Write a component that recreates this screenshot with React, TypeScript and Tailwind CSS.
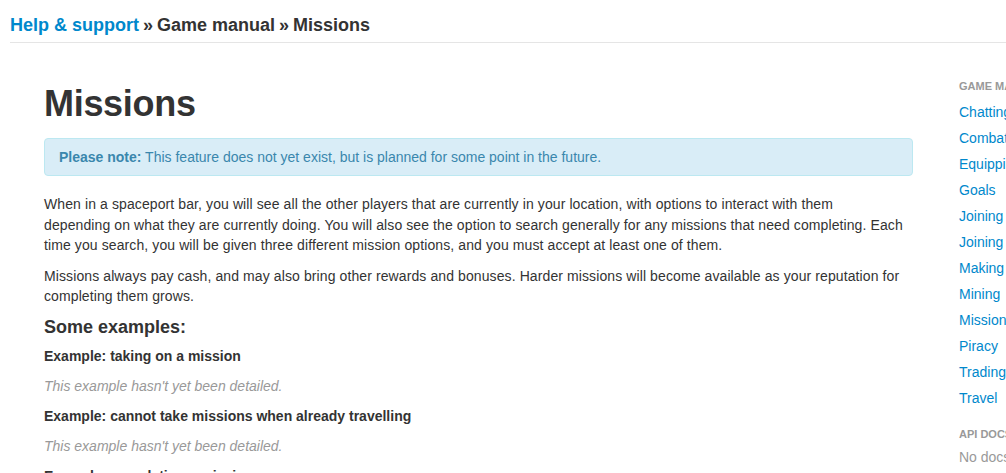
const sideLinks = [
  'Chatting',
  'Combat',
  'Equipping ships',
  'Goals',
  'Joining a faction',
  'Joining a guild',
  'Making money',
  'Mining',
  'Missions',
  'Piracy',
  'Trading',
  'Travel',
]

function Example({ title }: { title: string }) {
  return (
    <div>
      <h4 className="text-[14px] font-bold leading-[20px] mt-[10px]">{title}</h4>
      <p className="text-[14px] leading-[20px] italic text-[#999999] mt-[10px]">
        This example hasn't yet been detailed.
      </p>
    </div>
  )
}

export default function App() {
  return (
    <div
      className="h-screen w-full overflow-hidden bg-white text-[#333333]"
      style={{ fontFamily: '"Liberation Sans", Arial, sans-serif' }}
    >
      <div className="pl-[10px]">
        <div className="h-[43px] flex items-center border-b border-[#e5e5e5] text-[18px] font-bold pt-[8px]">
          <a className="text-[#0088cc]">Help &amp; support</a>
          <span className="mx-[4px]">»</span>
          <span>Game manual</span>
          <span className="mx-[4px]">»</span>
          <span>Missions</span>
        </div>
      </div>

      <div className="flex pl-[44px]">
        <div className="w-[869px] shrink-0">
          <h1 className="text-[36px] font-bold leading-[40px] mt-[41px] tracking-[-0.3px]">Missions</h1>
          <div className="mt-[14px] h-[38px] flex items-center rounded-[4px] border border-[#bce8f1] bg-[#d9edf7] text-[#3a87ad] text-[14px] pl-[14px]">
            <span>
              <b>Please note:</b> This feature does not yet exist, but is planned for some point in the future.
            </span>
          </div>
          <p className="text-[14px] leading-[20.5px] mt-[18px] tracking-[0.1px]">
            When in a spaceport bar, you will see all the other players that are currently in your location, with options to interact with them
            <br />
            depending on what they are currently doing. You will also see the option to search generally for any missions that need completing. Each
            <br />
            time you search, you will be given three different mission options, and you must accept at least one of them.
          </p>
          <p className="text-[14px] leading-[20.5px] mt-[10px] tracking-[0.1px]">
            Missions always pay cash, and may also bring other rewards and bonuses. Harder missions will become available as your reputation for
            <br />
            completing them grows.
          </p>
          <h3 className="text-[18px] font-bold leading-[24px] mt-[8px]">Some examples:</h3>
          <div className="-mt-[3px]">
            <Example title="Example: taking on a mission" />
            <Example title="Example: cannot take missions when already travelling" />
            <Example title="Example: completing a mission" />
          </div>
        </div>

        <div className="w-[200px] shrink-0 ml-[46px] pt-[36px]">
          <div className="text-[11px] font-bold uppercase text-[#999999] leading-[14px]">Game manual</div>
          <ul className="mt-[6px]">
            {sideLinks.map(l => (
              <li key={l} className="text-[14px] leading-[26px] text-[#0088cc] whitespace-nowrap">
                {l}
              </li>
            ))}
          </ul>
          <div className="text-[11px] font-bold uppercase text-[#999999] leading-[14px] mt-[16px]">API docs</div>
          <div className="text-[14px] text-[#999999] leading-[20px] mt-[6px] whitespace-nowrap">No docs</div>
        </div>
      </div>
    </div>
  )
}
